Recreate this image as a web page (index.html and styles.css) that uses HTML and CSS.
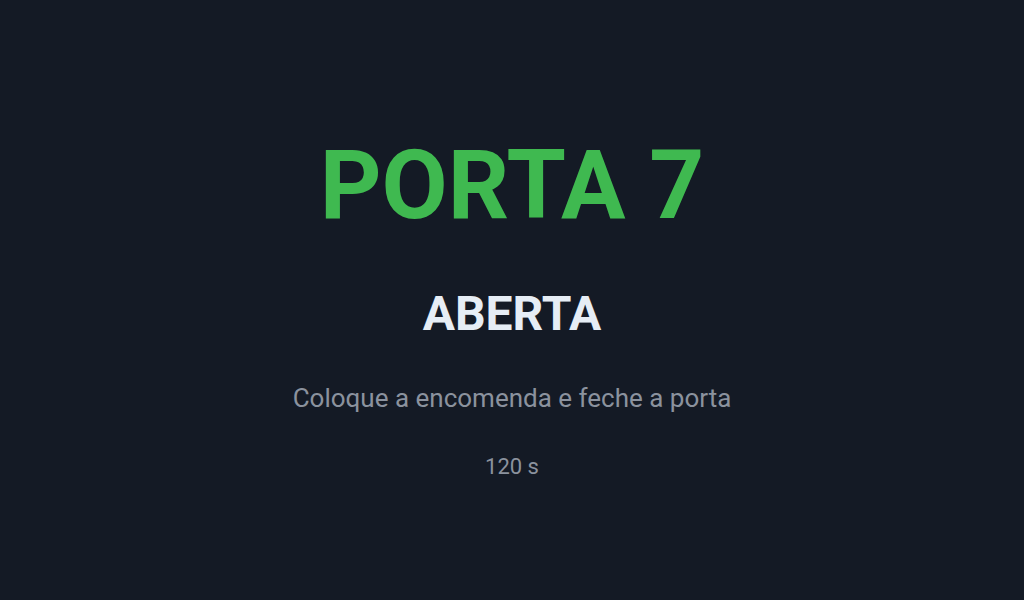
FILE: index.html
```html
<!DOCTYPE html>
<html lang="pt">
<head>
    <meta charset="utf-8">
    <title>Porta 7</title>
    <link rel="stylesheet" href="styles.css">
</head>
<body>
    <main class="screen">
        <h1 class="door">PORTA 7</h1>
        <h2 class="status">ABERTA</h2>
        <p class="hint">Coloque a encomenda e feche a porta</p>
        <p class="timer">120 s</p>
    </main>
</body>
</html>
```
FILE: styles.css
```css
body
{
    margin: 0;
    background-color: #141a25;
    font-family: Roboto, sans-serif;
}
.screen
{
    display: flex;
    flex-direction: column;
    align-items: center;
    justify-content: center;
    gap: 40px;
    box-sizing: border-box;
    min-height: 100vh;
    padding-top: 4px;
    text-align: center;
}
.door, .status, .hint, .timer
{
    margin: 0;
}
.door
{
    color: #3fb950;
    font-size: 96px;
    line-height: 122px;
}
.status
{
    color: #e6edf5;
    font-size: 48px;
    line-height: 56px;
}
.hint
{
    color: #8b929e;
    font-size: 26px;
    line-height: 32px;
}
.timer
{
    color: #8b929e;
    font-size: 22px;
    line-height: 26px;
}
```
